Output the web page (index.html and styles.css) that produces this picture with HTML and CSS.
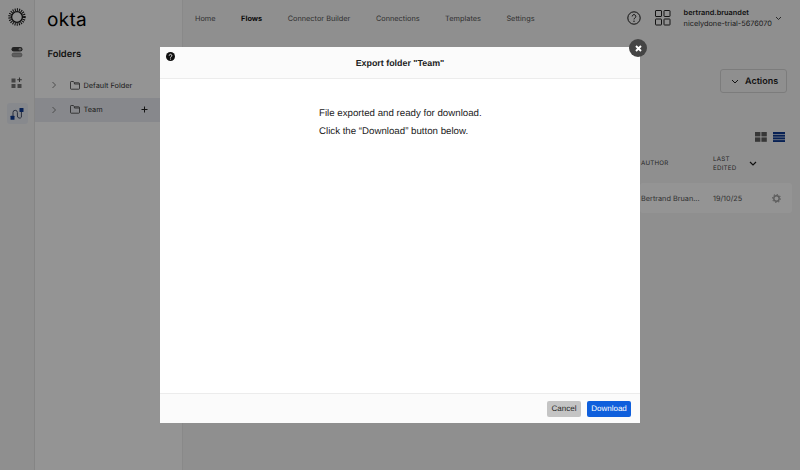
FILE: index.html
```html
<!DOCTYPE html>
<html lang="en">
<head>
<meta charset="utf-8">
<title>Okta Workflows</title>
<link rel="stylesheet" href="styles.css">
</head>
<body>
<div class="app">
  <aside class="rail">
    <svg class="rail-logo" width="18" height="18" viewBox="0 0 18 18"><circle cx="9" cy="9" r="5.4" fill="none" stroke="#161616" stroke-width="1.3"/><circle cx="9" cy="9" r="7.2" fill="none" stroke="#161616" stroke-width="3" stroke-dasharray="1 1.1"/></svg>
    <svg class="rail-icon" width="12" height="12" viewBox="0 0 12 12"><rect x="0.5" y="1" width="11" height="4.4" rx="2.2" fill="#3d3d3d"/><circle cx="9" cy="3.2" r="1.3" fill="#a0a0a0"/><rect x="1" y="7" width="10" height="3.8" rx="1.9" fill="#a3a3a3" stroke="#777" stroke-width=".7"/></svg>
    <svg class="rail-icon" width="12" height="12" viewBox="0 0 12 12"><rect x="0.5" y="1.5" width="4" height="4" fill="#767676"/><rect x="0.5" y="7" width="4" height="4" fill="#767676"/><rect x="6.5" y="7" width="4" height="4" fill="#767676"/><path d="M8.5 .5v4.6M6.2 2.8h4.6" stroke="#555" stroke-width="1.1"/></svg>
    <div class="rail-active">
      <svg width="14" height="14" viewBox="0 0 14 14"><rect x="0.5" y="8.8" width="4" height="4" rx=".5" fill="#0e3a92"/><rect x="9.5" y="1" width="4" height="4" rx=".5" fill="#0e3a92"/><path d="M3 9V5.5a2.2 2.2 0 0 1 4.4 0v3.5a2.2 2.2 0 0 0 4 1.2V5" fill="none" stroke="#45506a" stroke-width="1"/></svg>
    </div>
  </aside>
  <aside class="sidebar">
    <div class="brand">okta</div>
    <h2 class="folders-title">Folders</h2>
    <ul class="folder-list">
      <li class="folder">
        <svg class="chev" width="6" height="8" viewBox="0 0 6 8"><path d="M1.5 1l3 3-3 3" fill="none" stroke="#777" stroke-width=".9"/></svg>
        <svg class="folder-icon" width="10" height="9" viewBox="0 0 10 9"><path d="M.5 7.5V1.2q0-.7.7-.7h2.2l1 1.3h4.4q.7 0 .7.7v5q0 .7-.7.7H1.2q-.7 0-.7-.7zM4.4 1.8v1.2h5" fill="none" stroke="#3a3a3a" stroke-width=".8"/></svg>
        <span class="folder-name">Default Folder</span>
      </li>
      <li class="folder selected">
        <svg class="chev" width="6" height="8" viewBox="0 0 6 8"><path d="M1.5 1l3 3-3 3" fill="none" stroke="#777" stroke-width=".9"/></svg>
        <svg class="folder-icon" width="10" height="9" viewBox="0 0 10 9"><path d="M.5 7.5V1.2q0-.7.7-.7h2.2l1 1.3h4.4q.7 0 .7.7v5q0 .7-.7.7H1.2q-.7 0-.7-.7zM4.4 1.8v1.2h5" fill="none" stroke="#3a3a3a" stroke-width=".8"/></svg>
        <span class="folder-name">Team</span>
        <svg class="plus" width="7" height="7" viewBox="0 0 7 7"><path d="M3.5 .5v6M.5 3.5h6" stroke="#222" stroke-width="1"/></svg>
      </li>
    </ul>
  </aside>
  <main class="main">
    <header class="topbar">
      <nav class="nav">
        <a>Home</a><a class="current">Flows</a><a>Connector Builder</a><a>Connections</a><a>Templates</a><a>Settings</a>
      </nav>
      <div class="top-right">
        <svg width="14" height="14" viewBox="0 0 14 14"><circle cx="7" cy="7" r="6.2" fill="none" stroke="#161616" stroke-width="1"/><path d="M5.2 5.4a1.8 1.8 0 1 1 2.7 1.6c-.6.4-.9.7-.9 1.4" fill="none" stroke="#161616" stroke-width="1"/><circle cx="7" cy="10.2" r=".7" fill="#161616"/></svg>
        <svg width="16" height="16" viewBox="0 0 16 16"><g fill="none" stroke="#222" stroke-width="1"><rect x=".5" y=".5" width="6" height="6" rx=".5"/><rect x="9" y=".5" width="6" height="6" rx=".5"/><rect x=".5" y="9" width="6" height="6" rx=".5"/><rect x="9" y="9" width="6" height="6" rx=".5"/></g></svg>
        <div class="account">
          <div class="account-name">bertrand.bruandet</div>
          <div class="account-org">nicelydone-trial-5676070</div>
        </div>
        <svg class="account-chev" width="7" height="5" viewBox="0 0 7 5"><path d="M1 1l2.5 2.5L6 1" fill="none" stroke="#333" stroke-width=".9"/></svg>
      </div>
    </header>
    <div class="content">
      <div class="actions-row">
        <button class="actions">
          <svg width="8" height="6" viewBox="0 0 8 6"><path d="M1 1l3 3 3-3" fill="none" stroke="#222" stroke-width="1"/></svg>
          Actions
        </button>
      </div>
      <div class="view-row">
        <svg width="12" height="10" viewBox="0 0 12 10"><g fill="#5f5f5f"><rect width="5.4" height="4.4"/><rect x="6.4" width="5.4" height="4.4"/><rect y="5.4" width="5.4" height="4.4"/><rect x="6.4" y="5.4" width="5.4" height="4.4"/></g></svg>
        <svg width="12" height="10" viewBox="0 0 12 10"><g fill="#0e3a92"><rect width="12" height="2"/><rect y="2.7" width="12" height="2"/><rect y="5.4" width="12" height="2"/><rect y="8.1" width="12" height="1.9"/></g></svg>
      </div>
      <div class="table-head">
        <span class="col-author">AUTHOR</span>
        <span class="col-edited">LAST<br>EDITED</span>
        <svg width="8" height="6" viewBox="0 0 8 6"><path d="M1 1l3 3 3-3" fill="none" stroke="#1c1c1c" stroke-width="1.2"/></svg>
      </div>
      <div class="table-row">
        <span class="col-author">Bertrand Bruan...</span>
        <span class="col-edited">19/10/25</span>
        <svg class="gear" width="9" height="9" viewBox="0 0 10 10"><circle cx="5" cy="5" r="3" fill="none" stroke="#a0a0a0" stroke-width="1.6"/><circle cx="5" cy="5" r="4.4" fill="none" stroke="#a0a0a0" stroke-width="1.2" stroke-dasharray="1.4 2"/></svg>
      </div>
    </div>
  </main>
</div>

<div class="overlay"></div>

<section class="modal">
  <header class="modal-head">
    <svg class="modal-help" width="9" height="9" viewBox="0 0 9 9"><circle cx="4.5" cy="4.5" r="4.5" fill="#111"/><path d="M3.2 3.6a1.3 1.3 0 1 1 2 1.1c-.5.3-.7.5-.7 1" fill="none" stroke="#fff" stroke-width=".9"/><circle cx="4.5" cy="7" r=".55" fill="#fff"/></svg>
    <h1 class="modal-title">Export folder "Team"</h1>
  </header>
  <div class="modal-body">
    <p>File exported and ready for download.</p>
    <p>Click the “Download” button below.</p>
  </div>
  <footer class="modal-foot">
    <button class="btn btn-cancel">Cancel</button>
    <button class="btn btn-primary">Download</button>
  </footer>
  <button class="modal-close" aria-label="Close">
    <svg width="7" height="7" viewBox="0 0 7 7"><path d="M1 1l5 5M6 1L1 6" stroke="#fff" stroke-width="1.9"/></svg>
  </button>
</section>
</body>
</html>
```

FILE: styles.css
```css
* { box-sizing: border-box; }
html, body { margin: 0; height: 100%; overflow: hidden; }
body { font-family: Inter, "Liberation Sans", sans-serif; color: #1d1d1d; background: #f8f8f8; text-rendering: geometricPrecision; }
button { text-rendering: geometricPrecision; }

.app { display: flex; width: 800px; height: 470px; }

.rail {
  width: 35px; flex: none; background: #f7f7f7; border-right: 1px solid #e6e6e6;
  display: flex; flex-direction: column; align-items: center; padding-top: 8px;
}
.rail-logo { margin-bottom: 20px; }
.rail-icon { margin-bottom: 19px; }
.rail-active {
  width: 21px; height: 21px; margin-top: -5px; border-radius: 3px; background: #e9ecf3;
  display: flex; align-items: center; justify-content: center;
}

.sidebar { width: 148px; flex: none; background: #ffffff; border-right: 1px solid #ececec; }
.brand {
  font-size: 19px; line-height: 20px; letter-spacing: .3px;
  color: #000; padding: 10px 0 0 12px;
}
.folders-title { margin: 18px 0 0 12.5px; font-size: 9.4px; line-height: 14px; font-weight: 600; color: #1d1d1d; }
.folder-list { list-style: none; margin: 11px 0 0; padding: 0; }
.folder {
  display: flex; align-items: center; height: 24.5px; padding-left: 16px; font-size: 7.35px; color: #333;
}
.folder.selected { background: #e9ebf1; }
.chev { margin-right: 13px; }
.folder-icon { margin-right: 3.5px; }
.folder-name { flex: 1; }
.plus { margin-right: 34px; }

.main { flex: 1; min-width: 0; background: #f7f7f7; display: flex; flex-direction: column; }
.topbar { display: flex; align-items: flex-start; justify-content: space-between; height: 50px; padding-left: 12px; }
.nav { display: flex; gap: 25.5px; padding-top: 13px; font-size: 7.35px; line-height: 11px; color: #555; }
.nav .current { font-weight: 700; color: #111; }
.top-right { display: flex; align-items: center; padding-right: 18px; height: 36px; }
.top-right svg:first-child { margin-right: 14px; }
.top-right svg:nth-child(2) { margin-right: 13px; }
.account { font-size: 7.35px; line-height: 11.5px; }
.account-name { font-weight: 600; color: #1d1d1d; }
.account-org { color: #333; margin-top: 0; }
.account-chev { margin: 0 0 0 3px; }

.content { display: flex; flex-direction: column; align-items: flex-end; }
.actions-row { padding: 20px 13px 0 0; margin-top: -1px; }
.actions {
  display: flex; align-items: center; gap: 6px; width: 67px; height: 24px; padding: 1px 0 0 10px;
  border: 1px solid #d6d6d6; border-radius: 3px; background: transparent;
  font: 600 9px Inter, sans-serif; color: #1d1d1d;
}
.view-row { display: flex; gap: 6px; padding: 39px 15px 0 0; }
.table-head, .table-row { display: flex; align-items: center; width: 152px; margin-right: 8px; }
.table-head { height: 36px; margin-top: 4px; font-size: 6.2px; line-height: 9.5px; letter-spacing: .25px; color: #444; }
.table-row { height: 30px; margin-top: 1px; font-size: 7.3px; color: #555; background: #ffffff; border-radius: 3px; }
.col-author { width: 73px; padding-left: 1px; white-space: nowrap; }
.col-edited { width: 36px; }
.table-row .col-edited { width: 59px; }
.table-head svg { margin-left: 0; }

.overlay { position: fixed; inset: 0; background: rgba(0, 0, 0, .42); }

.modal {
  position: fixed; left: 160px; top: 47px; width: 480px; height: 376px;
  display: flex; flex-direction: column; background: #fff;
}
.modal-head {
  position: relative; height: 32px; flex: none; background: #fbfbfb; border-bottom: 1px solid #ececec;
  display: flex; align-items: center; justify-content: center;
}
.modal-help { position: absolute; left: 5.5px; top: 5px; }
.modal-title { margin: 0; font-family: "Liberation Sans", sans-serif; font-size: 8.9px; font-weight: 700; color: #222; }
.modal-body { flex: 1; padding: 26px 0 0 159px; font-family: "Liberation Sans", sans-serif; font-size: 9.7px; line-height: 18px; color: #222; }
.modal-body p { margin: 0; }
.modal-foot {
  height: 30px; flex: none; background: #fbfbfb; border-top: 1px solid #ececec;
  display: flex; align-items: center; justify-content: flex-end; gap: 6px; padding-right: 9px;
}
.btn { height: 16px; padding: 0; border: 0; border-radius: 2px; font: 400 8px "Liberation Sans", sans-serif; }
.btn-cancel { width: 34px; background: #c4c4c4; color: #2a2a2a; }
.btn-primary { width: 44px; background: #0f5fdc; color: #fff; }
.modal-close {
  position: absolute; right: -7px; top: -8px; width: 18px; height: 18px; padding: 0; border: 0; border-radius: 50%;
  background: #444; display: flex; align-items: center; justify-content: center;
}
```
